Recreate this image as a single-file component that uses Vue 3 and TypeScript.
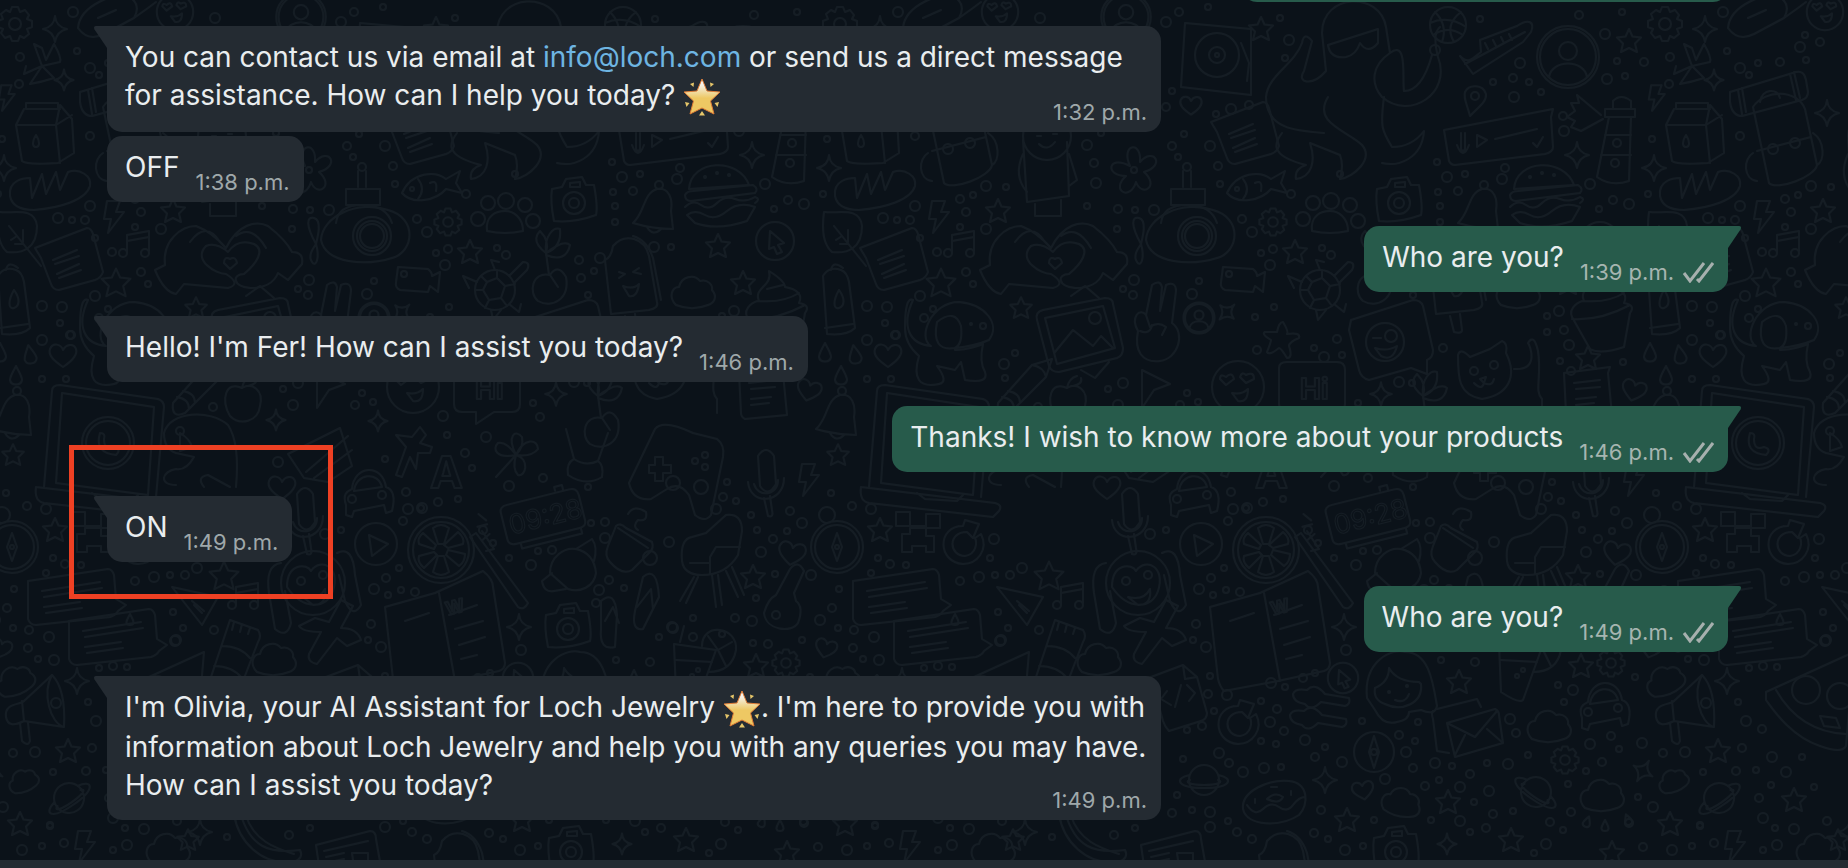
<script setup lang="ts">
interface Segment {
  kind: 'text' | 'link' | 'star'
  text?: string
}
interface Message {
  id: number
  side: 'in' | 'out'
  time: string
  lines: Segment[][]
  tail?: boolean
  wide?: boolean
  marked?: boolean
}

const t = (text: string): Segment => ({ kind: 'text', text })
const star: Segment = { kind: 'star' }

const messages: Message[] = [
  {
    id: 1,
    side: 'in',
    time: '1:32 p.m.',
    tail: true,
    wide: true,
    lines: [
      [t('You can contact us via email at '), { kind: 'link', text: 'info@loch.com' }, t(' or send us a direct message')],
      [t('for assistance. How can I help you today? '), star],
    ],
  },
  { id: 2, side: 'in', time: '1:38 p.m.', lines: [[t('OFF')]] },
  { id: 3, side: 'out', time: '1:39 p.m.', tail: true, lines: [[t('Who are you?')]] },
  { id: 4, side: 'in', time: '1:46 p.m.', tail: true, lines: [[t("Hello! I'm Fer! How can I assist you today?")]] },
  { id: 5, side: 'out', time: '1:46 p.m.', tail: true, lines: [[t('Thanks! I wish to know more about your products')]] },
  { id: 6, side: 'in', time: '1:49 p.m.', tail: true, marked: true, lines: [[t('ON')]] },
  { id: 7, side: 'out', time: '1:49 p.m.', tail: true, lines: [[t('Who are you?')]] },
  {
    id: 8,
    side: 'in',
    time: '1:49 p.m.',
    tail: true,
    wide: true,
    lines: [
      [t("I'm Olivia, your AI Assistant for Loch Jewelry "), star, t(". I'm here to provide you with")],
      [t('information about Loch Jewelry and help you with any queries you may have.')],
      [t('How can I assist you today?')],
    ],
  },
]

/* Wallpaper: line drawings around their own origin, placed on a tile that repeats sideways. */
const TILE = 825

const ring = (r: number, x = 0, y = 0) => `M${x - r} ${y}a${r} ${r} 0 1 0 ${2 * r} 0a${r} ${r} 0 1 0 ${-2 * r} 0`

const shapes: Record<string, string> = {
  star: 'M0-12L3.5-4.5L12-3.5L6 2.5L8 11L0 7L-8 11L-6 2.5L-12-3.5L-3.5-4.5Z',
  spark: 'M0-13Q1-2 12 0Q2 2 0 13Q-2 2-12 0Q-1-2 0-13Z',
  heart: 'M0 12C-10 5-15 0-13-6C-10-13-2-11 0-5C3-11 11-12 13-6C15 0 9 6 0 12Z',
  drop: 'M0-10C3-4 6 0 6 4C5 10-5 10-6 4C-6 0-3-4 0-10Z',
  bolt: 'M-6-16H7L3-5H11L-5 16L-2 2H-9Z',
  gear: 'M-3-17H3L5-12L10-14L14-9L12-5L17-3V3L12 5L14 10L9 14L5 12L3 17H-3L-5 12L-10 14L-14 9L-12 5L-17 3V-3L-12-5L-14-10L-9-14L-5-12Z' + ring(6),
  cloud: 'M-18 12C-26 4-22-6-15-6C-13-16 0-20 6-12C14-14 19-8 18-3C24 4 20 10 14 12C4 16-8 16-18 12Z',
  saturn: ring(15) + 'M-14-5C-30-2-28 8 0 8S30-2 14-5M-14 0C-20 2-14 5 0 5S20 2 14 0',
  ball: ring(18) + 'M-13-13Q0 0-6 17M13-13Q-4 0 6 17M-18-2Q0-10 18 2M-15 10Q0 0 15 10',
  portrait: ring(31) + ring(28) + ring(9, 0, -6) + 'M-19 20C-16 2 16 2 19 20',
  sneaker: 'M-37 4C-28 14-22 4-16 0L-17-12L20-26C32-34 38-30 34-20L26-10L-24 22L-37 4M-32 12L28-20M-12-9L-9-3M-4-12L-1-6M4-15L7-9M12-18L15-12',
  pin: 'M-5 16C-8 4-12-2-10-8C-6-16 8-16 11-6C12 2 2 8-5 16Z' + ring(4, 0, -4),
  voice: 'M-55-5L54-26L52-18L54 12C54 16 50 18 46 19L-44 30Q-48 30-50 26ZM-38-2V14M-34-2V14Q-36 18-38 14M-42 10Q-36 26-30 10M-22 0L-12 5L-22 12ZM-4 4L38-6M34 8L38 12L44 2',
  tower: 'M-8-26V-34Q0-42 10-34V-26M-16-26H14V-18H-16ZM-12-18L-24 42Q-10 52 8 46L10-18M-16 0H10M-20 20H10M-20-20L-44-40L-42-32L-50-32L-46-24L-54-18L-46-14L-50-8L-40-4L-18-16' + ring(4, -4, 8) + ring(4, -6, 28),
  milk: 'M-20-30H12V-24M-22-24L-30-8L-24 28Q-20 32 12 30L28 20L26-14L14-28L10-8H-30M10-8L14 30M10-8L26-18M-20-30V-24H14M-10 2C-6 8-6 14-10 14S-14 8-10 2',
  bread: 'M-40 6C-42-10-26-12-20-12L-18 8L-8-16L-4 4L6-18L10 0L18-18C30-22 42-14 40-4C36 10 10 18-16 20C-30 20-38 16-40 6Z',
  roll: 'M-38-4L28-24Q36-26 38-16L40-4Q40 2 34 4L-26 20Q-36 20-38 6ZM-30-6L-26 18M-26-8L-22 16M22-22L28 4M26-24L32 2M-8 6C-6-8 10-8 12 2',
  backpack: 'M-28-38C-16-56 16-56 24-36L36 20C34 32-4 46-12 38L-28-38M-24 6L30-8M-28 8C-38 14-38 34-24 36M32-12C44-4 44 16 36 20' + ring(5, -8, 4) + ring(5, 14, -2),
  burger: 'M-32-4C-30-34 18-36 28-8ZM-36 2Q-34-2-28-2L32-8Q38-4 34 0L-30 8Q-36 8-36 2M-36 14Q-28 6-20 12T-4 10T14 6T34 4Q40 6 34 10M-34 22Q-26 16-16 22T6 18T34 14L26 28Q-4 38-26 30Z' + ring(1, -16, -16) + ring(1, -4, -20) + ring(1, 8, -18),
  camera: 'M-22-12L-12-14L-8-22L8-24L12-16L20-16Q24 6 22 14Q0 22-20 20Q-24 0-22-12Z' + ring(11, 0, 2) + ring(5, 0, 2) + 'M-4-18L6-19V-14H-4Z',
  paw: 'M-18 16C-20 0-8-4 0-4S18 2 18 16Q0 20-18 16' + ring(7, -27, 4) + ring(7, -17, -12) + ring(8, 1, -14) + ring(7, 20, -10) + ring(7, 28, 6),
  bell: 'M-20 14C-8 4-10-16 4-20C16-22 20-10 18 2L20 20Q0 20-20 14M-6 18Q0 28 8 20' + ring(4, 6, -24),
  turtle: ring(20) + 'M-8-8L2-12L10-4L6 8L-6 10L-12 0ZM-8-8L-14-14M2-12V-20M10-4L20-6M6 8L12 16M-6 10L-10 18M-12 0H-20M14-14L28-28Q36-28 32-20L20-8M0-20L-4-30L4-28M-18-8L-32-14L-26-2M14 14L24 22L26 14M-4 20L-2 30L6 20',
  fish: 'M-28 6C-18-16 6-16 16-8L30-16L26-4L32 6L16 2C6 14-18 18-28 6M-12-8Q-4 2-12 12M0-4Q8-8 6 4' + ring(2, -18, 2),
  notes: 'M-10 8V-10L12-14V6M-10-4L12-8' + ring(4, -14, 8) + ring(4, 8, 8),
  hands: 'M-75 10L-65 5C-68-20-48-34-34-34Q-18-28-4-12C8-36 26-40 38-34Q56-20 62-8Q74-8 72 4L58 20L48 13Q42 28 20 28C2 26 2 14 14 14C26 4 36-10 24-16Q8-22-2-8Q-14-18-24-14C-38 0-14 14-4 14Q12 24-2 28L-46 24L-54 34Q-66 32-75 10M-40-18Q-24-40-10-18M6-24Q22-36 36-12M0 9L-6 3Q-6-4 0-1Q6-4 7 3Z',
  avocado: 'M-45 4C-44-20-8-36 22-26C52-18 48 16 26 22C0 30-40 28-45 4Z' + ring(19, 6) + ring(12, 6) + ring(15, 6) + 'M-50 8C-60-10-60-20-52-18S-48 0-50 8C-46 22-50 32-54 26S-54 14-50 8Z',
  video: 'M-20-13L10-11Q14-8 14-4L22-8L20 12L12 6L10 12L-18 10Q-23 8-22 2Z' + ring(3, -14, -6),
  plant: 'M0 8C-18 4-22 26-12 34C2 42 20 32 16 10Q8-4 0 8L8 20M-1 8L-4-14C-20-26-12-34-10-36Q0-26-4-14C-6-32 4-40 10-38Q12-20-4-14Q14-28 20-22Q16-4-4-12',
  popsicle: 'M-24-20Q-18-22-16-34C-4-48 16-42 20-24L28 22Q30 28 20 30L-18 34L-24-20M4-44Q18-40 24-22L32 20M-4 36L0 52Q8 54 8 50L6 34M-10-8L-4-6L-10-2M10-12L4-8L12-6M-6 6Q4 10 10 4Q8 18 0 16Z',
  picture: 'M-36-22L26-34Q34-34 34-28L44 16Q44 24 38 26L-20 40Q-28 40-30 34L-42-12Q-44-20-36-22M-34-14L24-26L36 16L-22 32ZM-24 20L-6-2L14 14L22 4L34 16M-8-36L6-46L20-34M2 38L16 46L30 30' + ring(6, 16, -14),
  peace: 'M-20 6C-28-8-18-18-12-10L-6-40Q2-46 4-38L2-14L8-40Q18-44 18-34L14-2C28 8 20 34 2 36C-16 38-24 26-20 6M-12-10L-8 2Q0-4 8 2L4 10M-18 6Q-8 10-6 0',
  dog: 'M-42-38C-54-12-46 6-24 8C-38 0-24-36 4-36C30-34 46-14 34 2Q20 8 0 10V12C14 12 28 6 28 6Q24 24 30 34Q34 46 10 42L6 24L0 32L-18 28Q-6 44-16 46Q-46 52-36 18Q-50 6-50-10Q-50-42-42-38M0 10Q-24 14-18-16Q0-30 6-12Q8 6 0 10' + ring(1, 16, -14) + ring(3, 28, -12),
  note: 'M-32-20L20-40Q24-40 26-34L36 4Q34 10 28 12L-8 22Q-14 22-16 16L-26-10ZM-14-8L10-18M-12-4L12-12M-10 6L12-4M-8 10L14 2',
  leaf: 'M-18-26C-4-24 18-32 20-12C20 10 6 16-10 14Q-22 4-18-26M-8-12L24 28M0-2L-6 2M6 6H-2M6-8V4',
  bottle: 'M-16-24Q-10-34 2-30Q8-28 10-18L16 28Q8 36-12 34ZM-14 28L14 24M-8-30Q-6-40 4-32M0-10C6-2 6 6 0 8S-6 0 0-10',
  cupcake: 'M-32 10C-36 0-24-6-20-6C-26-20-6-20-10-36Q6-26 6-20C18-18 24-12 20-4Q32-2 26 6L20 40Q-4 48-14 42ZM-32 12Q-4 14 26-2M-20-6Q4-4 20-14M-12-18L4-22',
  cursor: ring(19) + 'M-5-10L9 2L3 4L7 11L2 13L-1 6L-6 8Z',
  laptop: 'M-52 44L-44-52Q-44-58-36-58L62-44Q68-42 68-36L60 54M-40 40L-34-50L58-36L52 52ZM-60 44L74 60Q82 62 78 68L72 74L-52 60Q-62 58-60 44M-4 50L4 56L36 58L42 52' + ring(26, 12) + ring(22, 12) + 'M4-10Q-2 10 20 12Q26 6 18 4Q8 8 8-4Q10-10 4-10',
  mic: 'M-8-24Q0-36 8-24L10 4Q2 18-6 6ZM-18 2C-16 26 18 24 18-2M-12 4C-8 18 12 16 12 0M-2 18L2 36Q8 38 6 30L4 16',
  pad: 'M-54 10L-28-44Q-20-54 10-40L34-34Q42-28 40-16L28 42Q22 50 12 42L6 22Q-4 8-16 16L-32 26Q-50 28-54 10M-34-8H-28V-16H-20V-8H-12V0H-20V8H-28V0H-34Z' + ring(7, -10, 10) + ring(7, 18, 14) + ring(3, 12, -12) + ring(3, 22, -18) + ring(3, 22, -6),
  receipt: 'M-24-24L22-30L20-24L24 18L-18 22Q-22 20-22 16ZM-14-14L12-17M-12-8L12-10M-12 2L8 0M-12 8L6 6',
  pencil: 'M-26 16L8-22L28-28L22-10L-14 26Q-28 32-26 16M8-22Q20-20 22-10M-22 10Q-10 12-10 22M-16 4Q-4 6-4 16',
  apple: 'M-2-12C-18-20-24 0-14 16C-4 26 14 22 16 6C20-10 8-18-2-12Q0-22 8-24M4-14Q14-16 12-22',
  arrow: 'M-12-18L16-4L0 2L-12 20Z',
  face: ring(26) + 'M-12-2L-18-8Q-18-14-12-10Q-6-16-4-8ZM8-4L2-10Q4-16 8-12Q16-16 16-8ZM-6 6Q4 8 10 2Q10 16 0 14Z',
  speech: 'M-30-22Q-30-28-22-28H28Q36-28 36-20V14Q36 22 28 22H10L-8 34V22H-22Q-30 22-30 14Z',
  smiley: 'M-38-22L24-42Q32-42 34-36L44 8Q44 16 38 18L38 32L22 26L-20 38Q-28 36-30 28L-40-12Z' + ring(19, -4, 0) + ring(6, 2, -6) + 'M-16-4H-8M-14 6Q-2 10 8 4Q4 20-8 14Z',
  starfish: 'M2-18Q8-8 6-6Q20-8 18-2Q8 2 8 6Q12 18 6 18Q0 8-2 8Q-12 16-14 12Q-10 2-10 0Q-20-6-16-8Q-6-8-4-8Q-2-18 2-18Z',
  cat: 'M-30-22Q-28-30-18-20L2-28L14-36Q20-34 18-24C30 0 20 18-6 22C-30 18-30 0-30-22M26-8C52-6 42-32 40-34Q46-44 50-26C54 0 46 14 54 22V36' + ring(4, -14, -6) + ring(4, 6, -12) + 'M-8 2L-2 0L-4 6ZM-14 6Q-6 14-4 6Q4 10 6 2',
  clock: 'M-38-14Q-38-20-30-20H34Q42-20 42-12V14Q42 20 34 20H-30Q-38 20-38 14ZM-26 20V26H36V20M20-22V-26H28V-20M-60-18L-54-10M-64-6H-54M-62 8L-54 4',
  orange: ring(33) + ring(28) + 'M-3-6L-8-22Q0-28 8-22L3-6ZM3-5L17-18Q24-12 22-6L7-2ZM7 0L24 4Q24 12 18 16L5 5ZM3 6L8 22Q0 28-8 22L-3 6ZM-4 5L-17 18Q-24 12-22 6L-7 2ZM-7-1L-22-6Q-24-12-18-17L-5-5Z',
  mug: 'M-14-22Q-10-26-4-20L22-6Q24 0 20 4L2 22Q-8 28-20 14Q-26 8-22-2ZM-12-20L18 0M-2-34Q4-44 16-36Q18-26 8-28Q2-22 8-18' + ring(7, 20, 10),
  acorn: 'M-22 6C-22-10-8-20 4-18Q22-14 24 6C22 20 8 26-4 22ZM4-18L20-28Q26-20 22-6M-20 6L-30 14Q-28 26-18 24L-6 22',
  brush: 'M-34-40L-28-44L24 26Q20 34 14 30ZM-22-46L-10-28L-18-26',
  chair: 'M-30 8Q-32-14-20-16L-6-20L14-38Q30-40 30-22L26 2Q14 22-10 22Q-28 22-30 8M-22 10H-2M-2 20V4L4-6H28M-18 24L-32 48M-14 24L-26 50M0 22L4 54M6 22L10 52M14 18L26 44M20 14L32 42',
  compass: ring(26) + ring(22) + ring(8, -10, -32) + 'M0-14L5 0L0 14L-5 0Z' + ring(2),
  dial: ring(20) + 'M0-16L5 0L0 16L-5 0Z' + ring(3),
  blocks: 'M-22-18H-8V-4H-22ZM8-16H22V-2H8ZM-8-4H8M-16 4H-8V-2H8V6H16V22H8V16H-6V22H-16Z',
  reload: 'M2-20L16-16L10-2L4-8C-16-8-14 16 2 16C14 14 14 2 12-2L18-6C26 10 14 24 0 24C-26 22-26-14 0-14Z',
  dino: 'M-46-30C-40-52 0-54 18-38Q30-20 26 24M-34 22C-52 22-48 8-34 6Q-24 8-16-6L-34-10Q-46-14-46-30M-6 24Q-14 14-2 12L20 24M-30-30Q-20-24-18-16L-30-12Z' + ring(4, -30, -32),
  hat: 'M-34-8L18-34L30 4L6 20L-18 16ZM-16 10L26-26M-8 16L30-12',
  car: 'M-22 10C-26-2-20-4-16-6C-14-30 14-32 18-8C24-6 28 0 24 16L18 18L16 10L-14 16L-16 22L-22 20ZM-14-4C-12-22 10-24 14-8Z' + ring(4, -16, 4) + ring(4, 14, 0),
  plane: 'M-16-18L0-16L8-26L14-18L8-10L20-6L18 0L6 0L4 16L-2 4L-10 24L-16 22L-6-6Z',
  clover: 'M0 0C-20 4-24-6-18-12Q-10-14 0 0C-10-20 0-26 6-18Q8-8 0 0C8-18 22-16 22-6Q16 2 0 0C14 4 10 22 2 20Q-4 14 0 0M0 0L-20 22',
  cup: 'M-20-34L-12-4Q-20 0-18 12Q0 24 16 14Q18 2 12-2L22-30M-12-4Q0 4 12-2',
  play: ring(21) + 'M-7-9L12 0L-4 12Z',
  monkey: ring(32) + 'M-26 4C-26-20-6-20-2-12C8-26 28-16 20 8C14 26-10 28-26 4M-10 14Q6 18 12 6Q14 22 0 22Z' + ring(4, -12, -2) + ring(4, 10, -8) + 'M-32-20Q-48-18-44 10L-38 46Q-26 56-22 40L-28 8M24-30Q40-38 42-8L48 22Q40 36 32 18L26-8',
  book: 'M-58-16L-8-30L40-52Q50-44 50-36L62 40Q62 46 56 48L10 58L-44 68Q-48 64-50 56ZM-4-30L12 58M-38-2L-14-10M6-8L34-18M12 6L40-2M16 22L42 14M18 36L34 32',
  sandals: 'M-32-16Q-18-28-16-2L-18 30Q-34 34-32 12ZM10-40Q24-52 26-20L10 12Q-2 14 2-6ZM-28 4L-20-10L-14 6M4-10L18-28L20-8',
  cone: 'M-24-16L22-6L6 22ZM-4-2L8 8M-2 2L6 10',
  chat: 'M-44-16L36-28Q40-28 42-22L44 2L54 8L46 14Q44 18 38 20L-36 28Q-42 28-44 22ZM-30-6L28-15M-28 0L30-9M-28 10L8 5M-26 16L10 11',
  sock: 'M-10-30L18-20Q22-14 18-8L-2 44L-30 30ZM-6-28L-8-20M2-26L0-18M10-22L8-16M-18-4Q0-4 10 8M-26 16Q-8 16 2 28',
  rocket: 'M12-40L24-34L12-12Q28-12 32 0L18 6L8-2L-12 24Q-22 22-20 14L-8-8Q-26-8-30-14L-14-22L0-18Z',
  key: 'M8-38Q16-48 22-36L12-14L14-6Q22 0 16 16C10 26-16 24-18 6Q-14-8-6-12Z' + ring(4, -6, 8),
  drink: 'M-20-28L22-22L4 28Q0 32-18 20ZM-18-12L18-10M-14-30L-10-46M8-26C8-50 44-46 42-22Q38 0 14 0M24-22L14-36M24-22L38-30M24-22L32-6' + ring(2, -2, 4) + ring(2, 4, -2),
  pizza: 'M-34-20L54-60L46 34Q42 42 20 34C-10 24-28-4-34-12ZM-24-22Q0 20 46 22' + ring(14, 6, -22) + ring(13, 40, -16) + 'M20 4L36 6L40 16L24 14Z',
  file: 'M-24-16L8-28L22-16L32 20Q32 26 26 28L-6 38Q-10 34-12 28ZM8-28L10-14L22-16M-8-2L-14 6L-4 12M12-8L20 0L14 8M6-8L0 14',
  donut: 'M-32 6C-34-12-6-24 14-22C34-20 34 2 24 12C6 24-28 24-32 6M-28 2Q-20 14-12 6T4 4T18 2T30-6M-8-4Q0-12 8-6Q4 2-8-4M-20-4V0M-4-16H2M16-12V-8',
  banana: 'M-30-28C-20 8 0 14 30 10Q34 18 24 22C-10 26-32 0-36-26ZM-24-24C-16 0 4 8 24 14',
  news: 'M-30-8L24-22Q30-22 30-14L36 20H-26ZM-22-2L22-12M-20 4L-2 0M-20 10L-2 6M6 0H22V14H8Z',
  girl: 'M-34 8C-38-30-8-42 4-38C28-38 32-8 36 16Q34 26 20 20L8 22Q8 30-4 32Q-18 36-26 20ZM-12-22Q-12-8-26-2Q-28 10-16 14C0 22 22 14 20-6L18-8Q-4-8-12-22M-6 10Q4 14 8 4' + ring(1, -12, 2) + ring(1, 6, -4),
  mail: 'M-30-22L10-32L14-24M-34-20Q-36-18-34-12L-30 20L-18 22M-20-8L28-22Q32-20 32-16L36 12L-12 26ZM-20-8L8 6L30-20M-12 24L-2 4M36 12L20-2',
  weight: 'M-28-8Q-26-14-14-12Q-6-20 4-8L28-4Q30 2 24 4L0 0Q-10 10-16 2Q-28 0-28-8Z',
  horn: 'M-26 4C-28-10-12-8-8-12L20-38Q34-24 32 14L-8 8Q-24 16-26 4M-10-12L-8 8M-12 10L-10 28Q-4 34-2 28L-4 10M20-38C10-20 18 10 32 14' + ring(5, 24, -10),
  pinwheel: 'M0 0L-8-22L0-18L4-6L12-22Q20-8 18-4L0 0L-18 8L-16 0M0 0L-12 18Q0 16 12 12Z',
  ticket: 'M-50 6C-48-18-10-30 0-26Q14-18 6-4L-24 12Q-40 20-50 6M-30-4L-12-12M6-4L20-14L28-20',
  octopus: 'M-34-2C-34-42 24-44 30-8L34 18C16 30 14 48 26 62C54 86 96 58 82 22Q76-2 84-8M-34-2L-30 36C-44 52-60 48-52 36L-44 6Q-52-4-54 8C-62 30-88 40-90 62C-90 94-60 96-32 98M34 18C52 4 46 44 48 56Q66 56 76 20M-28 62C-44 88-8 96 6 110C18 124-2 142-16 144Q-12 130-16 120L-46 108C-40 126-44 142-60 144Q-62 134-50 130C-90 120-80 106-74 98M28 62C24 92 26 96 36 112Q56 112 68 96C66 124 42 132 26 128M-28 10L22-6V8Q12 20 4 8Q0 20-10 22Q-26 24-28 10',
  turntable: 'M-32-32L34-26V40L-36 32Q-34 0-32-32' + ring(22) + ring(8) + ring(2) + 'M24-12L32 8L30 26',
  flower: 'M-4-4C-14-26 8-30 6-8C20-24 32-4 10 2C26 16 8 28 2 12C-4 32-24 20-8 6C-30 6-26-16-4-4Z' + ring(3),
  cake: 'M-16 0H18V-16H-16ZM-26 18Q-24 0 0 0T30 18M-4-18V-34M4-18V-34' + ring(4, 0, -38),
  figure: ring(24, 0, -24) + 'M-24-20L-20 42L22 36L20-18M-24-6Q-34 16-20 32M22-6L30 20L22 26M-10-24H-6M6-26H10M-8-16Q0-8 8-18M-12 44V56H14V40',
}

type Placed = [string, number, number, number?, number?]

const placed: Placed[] = [
  ['star', 436, 29], ['octopus', 531, 35], ['ball', 623, 25], ['sneaker', 672, 52], ['portrait', 743, 57], ['star', 804, 41],
  ['gear', 15, 24], ['spark', 55, 29], ['ticket', 128, 22], ['face', 175, 12, 0, 0.7], ['pinwheel', 42, 66], ['spark', 64, 80, 0, 0.8],
  ['bolt', 6, 98, 0, 0.8], ['pin', 650, 100], ['voice', 674, 135], ['tower', 796, 135], ['milk', 46, 133], ['backpack', 131, 145],
  ['roll', 118, 96], ['spark', 177, 113], ['spark', 752, 155], ['spark', 4, 168], ['burger', 721, 193], ['bread', 50, 190],
  ['camera', 574, 201], ['paw', 505, 215], ['gear', 448, 222, 0, 0.8], ['bell', 653, 209], ['star', 470, 252], ['turtle', 495, 290],
  ['fish', 430, 187], ['bolt', 113, 217], ['star', 173, 211], ['notes', 137, 245], ['star', 116, 283, 0, 1.2],
  ['portrait', 301, 17, 0, 0.8], ['turntable', 392, 55], ['heart', 366, 105, 0, 0.8], ['note', 418, 142], ['flower', 309, 170],
  ['cake', 362, 205], ['figure', 222, 160], ['hands', 230, 260], ['avocado', 366, 236], ['video', 418, 280], ['plant', 550, 267],
  ['popsicle', 629, 280], ['star', 196, 308, 0, 0.9], ['picture', 254, 332], ['peace', 333, 325], ['dog', 130, 338], ['note', 67, 268],
  ['leaf', 17, 238], ['bottle', 14, 300], ['cupcake', 779, 307], ['cursor', 775, 241], ['star', 718, 246], ['star', 743, 283],
  ['cloud', 694, 293], ['heart', 63, 355], ['heart', 809, 390, 15, 0.9], ['drop', 0, 353], ['drop', 30, 355, -10], ['drop', 16, 376],
  ['laptop', 96, 443], ['bell', 11, 415], ['mic', 766, 480], ['bolt', 808, 480], ['star', 13, 455, 0, 0.9], ['pad', 683, 473],
  ['receipt', 763, 397], ['pencil', 199, 387], ['apple', 244, 400], ['arrow', 329, 388], ['face', 413, 387], ['speech', 484, 390],
  ['smiley', 564, 342], ['starfish', 456, 340], ['cat', 663, 377], ['spark', 556, 394, 0, 0.9], ['star', 763, 358],
  ['plant', 602, 410], ['portrait', 374, 318, 0, 0.5], ['spark', 402, 312, 45, 0.8], ['spark', 276, 420, 0, 0.8], ['spark', 378, 421, 0, 0.8],
  ['clock', 541, 517, -14], ['orange', 441, 550], ['mug', 630, 548], ['acorn', 572, 567], ['brush', 504, 577], ['chair', 712, 553],
  ['star', 753, 577], ['compass', 12, 547], ['star', 55, 530], ['blocks', 93, 530], ['reload', 138, 540], ['heart', 792, 553, 10],
  ['dino', 210, 463], ['hat', 322, 462], ['heart', 282, 487], ['car', 368, 495], ['plane', 412, 453], ['clover', 516, 455],
  ['cup', 586, 463], ['play', 376, 544], ['mic', 305, 518], ['monkey', 313, 583], ['book', 443, 623], ['camera', 568, 627],
  ['sandals', 633, 617], ['spark', 519, 627], ['star', 224, 576, 0, 1.2], ['cone', 196, 603], ['notes', 246, 597], ['chat', 72, 597],
  ['chat', 113, 637], ['sock', 240, 650], ['rocket', 329, 640], ['key', 782, 607], ['drink', 694, 672], ['star', 756, 666],
  ['gear', 786, 663, 0, 0.8], ['cloud', 275, 660], ['pizza', 150, 712], ['file', 350, 693], ['reload', 413, 720], ['saturn', 379, 780],
  ['donut', 450, 803], ['heart', 1, 648, 15, 0.8], ['banana', 270, 840], ['news', 346, 853], ['bolt', 84, 847], ['cloud', 169, 850],
  ['cursor', 518, 678, 0, 0.8], ['girl', 576, 690], ['mail', 642, 731], ['dial', 549, 752], ['weight', 496, 702], ['weight', 493, 723],
  ['cloud', 725, 727], ['car', 779, 708], ['horn', 32, 713], ['cloud', 16, 681, -20, 0.9], ['gear', 740, 760, 0, 0.8],
  ['saturn', 711, 792, 35], ['cloud', 778, 796], ['star', 634, 682], ['spark', 77, 681], ['star', 68, 751], ['spark', 500, 780],
  ['heart', 538, 790, -10, 0.8], ['cloud', 577, 803, 15, 0.9], ['star', 623, 802], ['star', 522, 820], ['star', 686, 840],
  ['spark', 622, 844, 0, 0.8], ['camera', 571, 850], ['saturn', 69, 798, -35], ['cloud', 24, 781, -20, 0.7], ['star', 144, 800],
  ['star', 20, 824], ['spark', 818, 771, 30, 0.9], ['popsicle', 458, 875], ['star', 787, 853], ['drop', 762, 822, 20, 0.6],
  ['drop', 780, 826, 0, 0.6], ['drop', 803, 820, -20, 0.6], ['spark', 200, 832], ['star', 188, 840, 0, 0.9], ['drop', 130, 620, 0, 0.6],
]

const atEdges = (x: number, reach: number) => [x, ...(x < reach ? [x + TILE] : []), ...(x > TILE - reach ? [x - TILE] : [])]

const doodles = placed.flatMap(([name, x, y, turn = 0, size = 1]) =>
  atEdges(x, 70).map((cx) => ({ d: shapes[name], place: `translate(${cx} ${y}) rotate(${turn}) scale(${size})` })),
)

const dotPoints = `455,18 464,40 460,58 424,105 610,50 655,19 754,15 797,12 780,34 792,61 819,62 782,79 800,76 20,57 77,51
73,12 155,35 170,42 150,47 156,60 130,62 108,63 90,68 99,75 19,84 695,63 668,82 688,78 704,82 689,97 716,92 738,116 739,131
2,139 90,136 612,162 622,177 640,174 680,168 677,179 613,192 633,191 615,206 765,184 774,209 788,200 804,204 823,194 466,194
515,174 427,232 436,253 448,249 445,265 497,248 506,255 615,222 90,206 148,195 135,199 161,186 181,187 141,212 135,227
161,229 72,220 85,220 58,218 95,238 112,252 148,284 215,18 383,7 354,12 341,22 347,91 341,107 391,114 406,109 359,134 347,146
385,146 353,157 393,166 395,184 262,145 276,133 269,163 271,183 262,206 293,209 310,210 329,210 292,229 417,219 309,280
298,289 308,295 374,281 367,294 449,307 579,260 600,258 594,271 581,278 588,295 654,247 671,247 141,272 95,296 108,309 70,335
66,379 62,307 283,389 213,407 293,405 362,393 355,405 373,402 443,416 533,403 540,417 298,383 430,317 432,350 489,348 499,357
517,355 512,339 574,382 587,383 618,348 722,316 734,311 722,332 739,330 744,345 735,361 746,371 798,362 42,306 60,323 71,335
42,340 42,379 99,318 190,353 179,364 180,378 543,478 509,486 588,487 438,502 458,499 422,508 591,523 605,522 605,538 538,551
552,550 509,558 531,565 493,543 483,530 669,542 727,482 723,497 736,501 716,509 751,515 790,511 802,523 757,530 773,539
787,531 761,552 6,493 27,506 46,509 53,558 65,564 81,565 169,539 165,558 135,581 154,577 170,575 185,575 46,573 811,575
775,574 609,580 278,462 447,435 465,453 472,468 486,437 385,459 406,492 408,509 421,508 403,521 341,530 325,534 399,568
386,578 374,589 401,590 415,592 388,595 197,568 173,612 214,630 175,641 183,628 371,624 368,640 599,590 624,588 596,603
672,627 659,637 7,608 14,589 820,620 13,628 29,630 49,637 802,640 28,648 38,659 54,660 756,598 735,618 752,621 693,618
693,637 722,634 673,628 753,643 768,644 176,640 99,668 113,666 127,667 381,647 385,676 383,694 402,695 389,711 377,726
362,730 394,753 358,759 404,763 418,772 352,795 347,813 367,810 385,812 403,821 412,832 385,827 310,828 289,835 227,837
22,850 42,846 64,843 127,845 113,850 818,847 125,828 144,829 50,826 804,823 446,683 460,687 478,678 490,673 521,650 436,701
452,709 445,722 436,741 459,731 451,744 480,740 500,747 490,757 517,762 537,721 574,735 590,741 581,752 593,722 588,768
610,763 627,766 645,774 662,763 683,764 703,755 691,733 685,719 616,660 650,662 733,685 748,690 739,702 786,736 765,744
794,749 777,762 761,771 817,743 810,677 13,753 35,752 53,772 86,771 106,770 122,757 152,757 92,748 96,721 88,702 112,729
121,785 136,772 164,787 109,798 113,818 50,825 177,821 813,797 3,807 743,784 746,812 664,791 649,802 668,814 688,811 635,787
614,780 600,786 560,779 549,820 496,810 606,820 635,821 645,832 661,828 439,768 456,767 489,833 503,839 520,850 538,846
427,839 721,844 709,853 725,822 738,830`

const radii = [3, 5, 3, 4, 5, 3, 4]
const dots = dotPoints.split(/\s+/).flatMap((pair, i) => {
  const [x, y] = pair.split(',').map(Number)
  return atEdges(x, 6).map((cx) => ({ x: cx, y, r: radii[i % radii.length] }))
})
</script>

<template>
  <main class="chat">
    <svg class="wallpaper" aria-hidden="true">
      <defs>
        <pattern id="doodles" :width="TILE" height="1498" patternUnits="userSpaceOnUse">
          <path v-for="(item, i) in doodles" :key="i" :d="item.d" :transform="item.place" />
          <circle v-for="(dot, i) in dots" :key="'c' + i" :cx="dot.x" :cy="dot.y" :r="dot.r" />
          <text x="475" y="399" font-size="28">Hi</text>
          <text x="430" y="488" font-size="44">A</text>
          <text class="digits" x="508" y="527" font-size="27" transform="rotate(-14 541 517)">09:28</text>
          <text x="447" y="613" font-size="18" transform="rotate(-14 456 612)">W</text>
        </pattern>
      </defs>
      <rect width="100%" height="100%" fill="url(#doodles)" />
    </svg>

    <section class="thread">
      <div class="bubble out earlier"></div>
      <article
        v-for="m in messages"
        :key="m.id"
        class="bubble"
        :class="[m.side, { tailed: m.tail, wide: m.wide }]"
      >
        <svg v-if="m.tail" class="tail" viewBox="0 0 16 24" aria-hidden="true">
          <path d="M16 0H3Q0 0 1.500 3.500L14 22L16 24Z" />
        </svg>
        <p class="body">
          <span v-for="(line, i) in m.lines" :key="i" class="line">
            <template v-for="(s, j) in line" :key="j">
              <a v-if="s.kind === 'link'" :href="'mailto:' + s.text">{{ s.text }}</a>
              <svg v-else-if="s.kind === 'star'" class="emoji" viewBox="0 0 38 38" role="img" aria-label="Glowing star">
                <defs>
                  <linearGradient id="glow" x1="0" y1="0" x2="0" y2="1">
                    <stop offset="0.150" stop-color="#f4f3ee" />
                    <stop offset="0.550" stop-color="#eec863" />
                  </linearGradient>
                </defs>
                <path class="ray" d="M7 6L11 4.500L10.500 9ZM31 6L27 4.500L27.500 9ZM2 24L6.500 25L3.500 29ZM36 24L31.500 25L34.500 29ZM19 33L22 37.500H16Z" />
                <path
                  fill="url(#glow)"
                  stroke="#df7c35"
                  stroke-linejoin="round"
                  d="M19 1L24 13L37 14L27.500 23L31 36L19 30L7 36L10.500 23L1 14L14 13Z"
                />
              </svg>
              <template v-else>{{ s.text }}</template>
            </template>
          </span>
        </p>
        <span class="meta">
          <time>{{ m.time }}</time>
          <svg v-if="m.side === 'out'" class="ticks" viewBox="0 0 32 22" role="img" aria-label="Delivered">
            <path d="M2 12L8 20L22 2M15 18L17 20L31 2" />
          </svg>
        </span>
        <span v-if="m.marked" class="marker" aria-hidden="true"></span>
      </article>
    </section>

    <footer class="composer"></footer>
  </main>
</template>

<style>
body {
  margin: 0;
  background: #0b1219;
}
</style>

<style scoped>
.chat {
  position: relative;
  display: flex;
  flex-direction: column;
  height: 100vh;
  overflow: hidden;
  background: #0b1219;
  color: #e9edef;
  font-family: Inter, "Liberation Sans", sans-serif;
}

.wallpaper {
  position: absolute;
  inset: 0;
  width: 100%;
  height: 100%;
}

.wallpaper path,
.wallpaper circle,
.wallpaper text {
  fill: none;
  stroke: #151d24;
  stroke-width: 2;
  stroke-linejoin: round;
  stroke-linecap: round;
  vector-effect: non-scaling-stroke;
}

.wallpaper text {
  font-weight: 700;
}

.wallpaper .digits {
  font-weight: 400;
  stroke-width: 1;
}

.thread {
  position: relative;
  flex: 1;
  min-height: 0;
  box-sizing: border-box;
  display: flex;
  flex-direction: column;
  justify-content: flex-end;
  align-items: flex-start;
  padding: 0 120px 40px 107px;
}

.bubble {
  position: relative;
  flex: none;
  box-sizing: border-box;
  display: flex;
  align-items: flex-end;
  gap: 16px;
  min-height: 66px;
  margin-top: 4px;
  padding: 12px 14px 6px 18px;
  border-radius: 15px;
  background: #242b32;
}

.tailed {
  margin-top: 24px;
}

.in.tailed {
  border-top-left-radius: 0;
}

.out {
  align-self: flex-end;
  background: #275b4b;
}

.out.tailed {
  border-top-right-radius: 0;
}

.earlier {
  width: 486px;
}

.wide {
  display: grid;
  width: 100%;
  max-width: 1054px;
}

.wide .body,
.wide .meta {
  grid-area: 1 / 1;
}

.tail {
  position: absolute;
  top: 0;
  left: -14px;
  width: 16px;
  height: 24px;
  fill: #242b32;
}

.out .tail {
  left: auto;
  right: -14px;
  transform: scaleX(-1);
  fill: #275b4b;
}

.body {
  margin: 0;
  padding-bottom: 10px;
  font-size: 28px;
  line-height: 38px;
}

.line {
  display: block;
  white-space: pre-wrap;
}

.body a {
  color: #6eb5e2;
  text-decoration: none;
}

.emoji {
  width: 38px;
  height: 38px;
  vertical-align: -11px;
}

.ray {
  fill: #e5c66a;
}

.meta {
  display: flex;
  align-items: center;
  justify-self: end;
  gap: 8px;
  color: #9fa8aa;
  font-size: 22px;
  line-height: 28px;
}

.out .meta {
  color: #a6b5b0;
}

.ticks {
  width: 32px;
  height: 22px;
  fill: none;
  stroke: #a6b0ae;
  stroke-width: 3;
}

.marker {
  position: absolute;
  top: -51px;
  right: -41px;
  bottom: -37px;
  left: -38px;
  border: 5px solid #ee4023;
}

.composer {
  position: relative;
  height: 8px;
  background: #242b32;
}
</style>
